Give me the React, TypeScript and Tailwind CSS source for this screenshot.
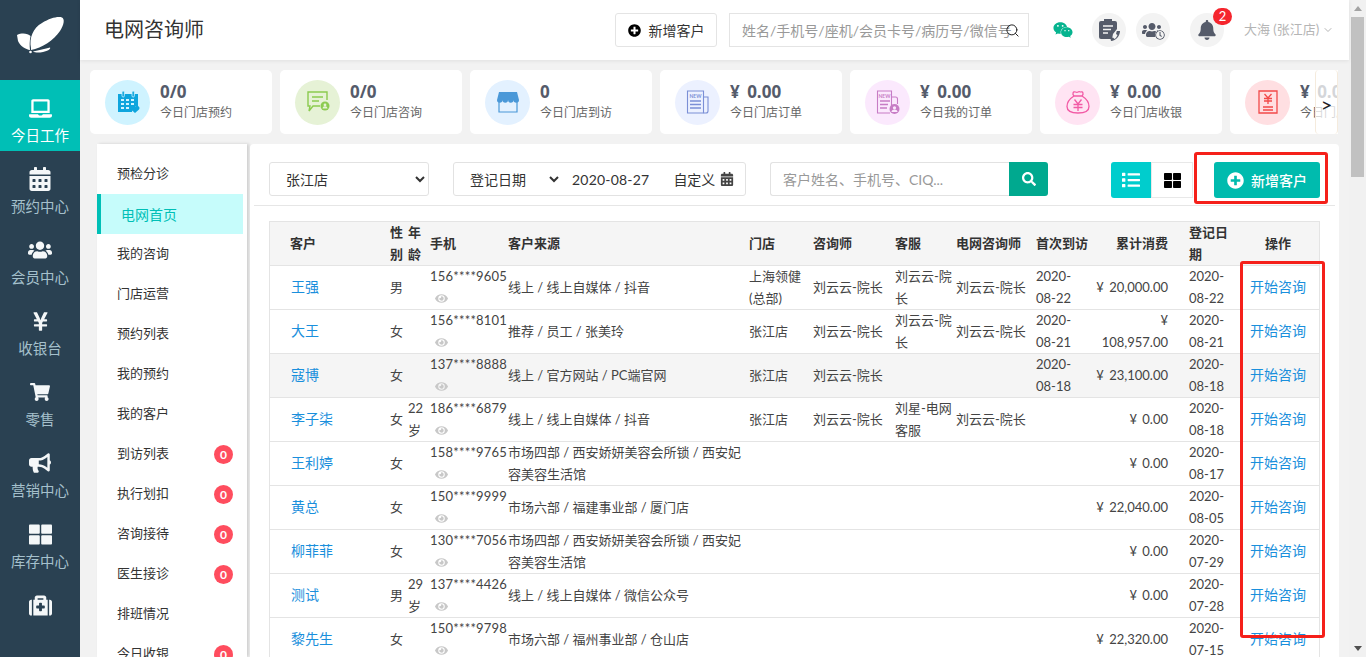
import React from "react";
import {
  FaLaptop, FaCalendarAlt, FaUsers, FaYenSign, FaShoppingCart, FaBullhorn, FaThLarge, FaMedkit,
  FaPlusCircle, FaEye, FaSearch, FaList, FaBell, FaWeixin, FaRegClock,
} from "react-icons/fa";
import { ChevronDown, Search } from "lucide-react";

const navItems = [
  { label: "今日工作", Icon: FaLaptop, active: true, size: "text-[23px]" },
  { label: "预约中心", Icon: FaCalendarAlt, size: "text-[24px]" },
  { label: "会员中心", Icon: FaUsers, size: "text-[24px]" },
  { label: "收银台", Icon: FaYenSign, size: "text-[21px]" },
  { label: "零售", Icon: FaShoppingCart, size: "text-[20px]" },
  { label: "营销中心", Icon: FaBullhorn, size: "text-[22px]" },
  { label: "库存中心", Icon: FaThLarge, size: "text-[23px]" },
  { label: "", Icon: FaMedkit, size: "text-[23px]" },
];

function CalIcon() {
  return (
    <svg viewBox="0 0 24 24" className="w-6 h-6" fill="#0ea5dd">
      <path d="M2 4h20v12a6 6 0 0 0-6 6H2z" />
      <rect x="6" y="1" width="2.4" height="6" rx="1.2" stroke="#cff3ff" strokeWidth="0.8" />
      <rect x="16" y="1" width="2.4" height="6" rx="1.2" stroke="#cff3ff" strokeWidth="0.8" />
      <path d="M5 9h3v2H5zM10 9h3v2h-3zM15 9h3v2h-3zM5 13h3v2H5zM10 13h3v2h-3zM15 13h3v2h-3zM5 17h3v2H5zM10 17h3v2h-3z" fill="#cff3ff" />
      <path d="M19 23l-4-3.6a2.3 2.3 0 0 1 3.2-3.2l.8.8.8-.8a2.3 2.3 0 0 1 3.2 3.2z" />
    </svg>
  );
}
function ChatIcon() {
  return (
    <svg viewBox="0 0 24 24" className="w-6 h-6" fill="none" stroke="#8ccb50" strokeWidth="1.4">
      <path d="M14 16H7l-4 5 1-5H2V2h19v8" />
      <path d="M6 7h11M6 11h7" />
      <circle cx="19" cy="16" r="4.5" fill="#8ccb50" stroke="none" />
      <circle cx="19" cy="15" r="1.4" fill="#e6f2d6" stroke="none" />
      <path d="M16.5 18.5a2.5 2.2 0 0 1 5 0z" fill="#e6f2d6" stroke="none" />
    </svg>
  );
}
function StoreIcon() {
  return (
    <svg viewBox="0 0 24 24" className="w-6 h-6" fill="none">
      <path d="M3 10v12h18V10" stroke="#4a98d8" strokeWidth="1.2" />
      <path d="M3 2h18l2 8a2.7 2.7 0 0 1-5.5 0 2.7 2.7 0 0 1-5.5 0 2.7 2.7 0 0 1-5.5 0 2.7 2.7 0 0 1-5.5 0z" fill="#4a98d8" />
    </svg>
  );
}
function NewsIcon() {
  return (
    <svg viewBox="0 0 24 24" className="w-6 h-6" fill="none" stroke="#7b8fd6" strokeWidth="1.1">
      <path d="M1.5 1h16v22h-16z" />
      <path d="M17.5 7h4.5v14a2 2 0 0 1-2 2h-2.5" />
      <text x="9.5" y="7.5" fontSize="5" fontWeight="700" fill="#7b8fd6" stroke="none" textAnchor="middle">NEW</text>
      <path d="M4 11h11M4 14.5h11M4 18h11" strokeWidth="1.4" />
    </svg>
  );
}
function NewsPersonIcon() {
  return (
    <svg viewBox="0 0 24 24" className="w-6 h-6" fill="none" stroke="#c77cc5" strokeWidth="1.1">
      <path d="M14 23H1.5V1h14v15" />
      <path d="M15.5 7h4a2 2 0 0 1 2 2v5" />
      <text x="8.5" y="7.5" fontSize="5" fontWeight="700" fill="#c77cc5" stroke="none" textAnchor="middle">NEW</text>
      <path d="M4 11h10M4 14.5h8M4 18h7" strokeWidth="1.4" />
      <circle cx="18.5" cy="19" r="5" fill="#c77cc5" stroke="none" />
      <circle cx="18.5" cy="17.8" r="1.6" fill="#fbe9fd" stroke="none" />
      <path d="M15.5 22a3 2.5 0 0 1 6 0z" fill="#fbe9fd" stroke="none" />
    </svg>
  );
}
function BagIcon() {
  return (
    <svg viewBox="0 0 24 24" className="w-6 h-6" fill="none" stroke="#f25aa5" strokeWidth="1.3">
      <path d="M8 6C6 4 7 1 9.5 2c1.2.5 1.7.5 2.5 0s1.3-.5 2.5 0C17 1 18 4 16 6" />
      <path d="M8 6h8c4 2.5 7 6.5 7 10.5 0 4-4 6.5-11 6.5S1 20.5 1 16.5C1 12.5 4 8.5 8 6z" />
      <path d="M8.5 9.5 12 14l3.5-4.5M7.5 14.5h9M7.5 17.5h9M12 14v7" />
    </svg>
  );
}
function ReceiptIcon() {
  return (
    <svg viewBox="0 0 24 24" className="w-6 h-6" fill="none" stroke="#f24a4a" strokeWidth="1.3">
      <path d="M3 1h18v22H3z" />
      <path d="M8.5 4 12 8l3.5-4M8 8.5h8M8 11h8M12 8v6" />
      <path d="M7 17h10M7 20h10" strokeWidth="1.5" />
    </svg>
  );
}

const stats = [
  { value: "0/0", label: "今日门店预约", bg: "bg-[#cff3ff]", icon: <CalIcon /> },
  { value: "0/0", label: "今日门店咨询", bg: "bg-[#e6f2d6]", icon: <ChatIcon /> },
  { value: "0", label: "今日门店到访", bg: "bg-[#e3f1ff]", icon: <StoreIcon /> },
  { value: "¥ 0.00", label: "今日门店订单", bg: "bg-[#ecf1ff]", icon: <NewsIcon /> },
  { value: "¥ 0.00", label: "今日我的订单", bg: "bg-[#fbe9fd]", icon: <NewsPersonIcon /> },
  { value: "¥ 0.00", label: "今日门店收银", bg: "bg-[#ffe4f3]", icon: <BagIcon /> },
  { value: "¥ 0.00", label: "今日门店退款", bg: "bg-[#ffdfe2]", icon: <ReceiptIcon /> },
];

const menu = [
  { label: "预检分诊" },
  { label: "电网首页", active: true },
  { label: "我的咨询" },
  { label: "门店运营" },
  { label: "预约列表" },
  { label: "我的预约" },
  { label: "我的客户" },
  { label: "到访列表", badge: true },
  { label: "执行划扣", badge: true },
  { label: "咨询接待", badge: true },
  { label: "医生接诊", badge: true },
  { label: "排班情况" },
  { label: "今日收银", badge: true },
];

const heads = ["客户", "性别", "年龄", "手机", "客户来源", "门店", "咨询师", "客服", "电网咨询师", "首次到访", "累计消费", "登记日期", "操作"];
const widths = ["w-[120px]", "w-[18px]", "w-[22px]", "w-[78px]", "w-[241px]", "w-[64px]", "w-[82px]", "w-[61px]", "w-[80px]", "w-[53px]", "w-[100px]", "w-[51px]", "w-[79px]"];

const D = "刘云云-院长";
const rows = [
  { n: "王强", s: "男", a: "", p: "156****9605", f: "线上 / 线上自媒体 / 抖音", st: "上海领健(总部)", c: D, k: D, w: D, v: "2020-08-22", t: "¥ 20,000.00", r: "2020-08-22" },
  { n: "大王", s: "女", a: "", p: "156****8101", f: "推荐 / 员工 / 张美玲", st: "张江店", c: D, k: D, w: D, v: "2020-08-21", t: "¥ 108,957.00", r: "2020-08-21" },
  { n: "寇博", s: "女", a: "", p: "137****8888", f: "线上 / 官方网站 / PC端官网", st: "张江店", c: D, k: "", w: "", v: "2020-08-18", t: "¥ 23,100.00", r: "2020-08-18", hl: true },
  { n: "李子柒", s: "女", a: "22岁", p: "186****6879", f: "线上 / 线上自媒体 / 抖音", st: "张江店", c: D, k: "刘星-电网客服", w: D, v: "", t: "¥ 0.00", r: "2020-08-18" },
  { n: "王利婷", s: "女", a: "", p: "158****9765", f: "市场四部 / 西安娇妍美容会所锁 / 西安妃容美容生活馆", st: "", c: "", k: "", w: "", v: "", t: "¥ 0.00", r: "2020-08-17" },
  { n: "黄总", s: "女", a: "", p: "150****9999", f: "市场六部 / 福建事业部 / 厦门店", st: "", c: "", k: "", w: "", v: "", t: "¥ 22,040.00", r: "2020-08-05" },
  { n: "柳菲菲", s: "女", a: "", p: "130****7056", f: "市场四部 / 西安娇妍美容会所锁 / 西安妃容美容生活馆", st: "", c: "", k: "", w: "", v: "", t: "¥ 0.00", r: "2020-07-29" },
  { n: "测试", s: "男", a: "29岁", p: "137****4426", f: "线上 / 线上自媒体 / 微信公众号", st: "", c: "", k: "", w: "", v: "", t: "¥ 0.00", r: "2020-07-28" },
  { n: "黎先生", s: "女", a: "", p: "150****9798", f: "市场六部 / 福州事业部 / 仓山店", st: "", c: "", k: "", w: "", v: "", t: "¥ 22,320.00", r: "2020-07-15" },
];

const td = "border-b border-[#e4e4e4] align-middle p-0";

export default function App() {
  return (
    <div className="flex h-[657px] w-[1366px] overflow-hidden bg-[#f2f2f2] text-[13px] text-[#444] font-['Lato','Noto_Sans_CJK_SC',sans-serif]">
      {/* side navigation */}
      <aside className="w-20 shrink-0 bg-[#2a4152] flex flex-col">
        <div className="h-20 shrink-0">
          <svg viewBox="0 0 80 80" className="w-20 h-20" fill="#fff">
            <path d="M31 48C29 38 33 28 42 23C50 18 58 16 62 17.5C65 19 64 25 60 31C54 40 42 48 31 50Z" />
            <path d="M17 35C22 32.5 28 33.5 30.5 36C29.5 41 29.5 46 30 50C26 49.5 20 46 18 41Z" />
            <path d="M33 51.5C39 50.5 45 48.5 50 47.5C51 49 48 51 43 52C39 52.8 35 52.8 33 51.5Z" />
            <circle cx="30.5" cy="52" r="1.3" />
          </svg>
        </div>
        {navItems.map(({ label, Icon, active, size }, i) => (
          <div key={i} className={`h-[71px] shrink-0 flex flex-col items-center pt-[15px] ${active ? "bg-[#00bfb6] text-white" : "text-[#a5c0cc]"}`}>
            <div className={`h-[26px] flex items-center justify-center ${size} ${active ? "text-white" : "text-[#f4f7f8]"}`}>
              <Icon />
            </div>
            <div className="mt-[5px] text-[14.5px] leading-5 whitespace-nowrap">{label}</div>
          </div>
        ))}
      </aside>

      {/* main column */}
      <div className="w-[1269px] shrink-0 flex flex-col">
        <header className="h-[60px] shrink-0 bg-white shadow-[0_1px_4px_rgba(0,0,0,0.08)] flex items-center pl-6 relative z-10">
          <h1 className="w-[511px] -mt-[2px] text-[20px] text-[#333] font-normal leading-none">电网咨询师</h1>
          <button className="w-[102px] h-[34px] border border-[#e4e4e4] rounded-[3px] flex items-center justify-center gap-[8px] text-[14px] text-[#333]">
            <FaPlusCircle className="text-[13px] text-black" />
            <span>新增客户</span>
          </button>
          <div className="ml-3 w-[300px] h-[34px] border border-[#e4e4e4] flex items-center pl-3 pr-2 overflow-hidden">
            <span className="flex-1 overflow-hidden whitespace-nowrap text-[#999] text-[14px]">姓名/手机号/座机/会员卡号/病历号/微信号</span>
            <Search className="w-[15px] h-[15px] text-[#222] -ml-[8px] shrink-0" strokeWidth={1.6} />
          </div>
          <FaWeixin className="ml-6 text-[20px] text-[#06b48f]" />
          <div className="ml-[19px] w-[34px] h-[34px] rounded-full bg-[#f3f3f3] flex items-center justify-center">
            <svg viewBox="0 0 24 24" className="w-6 h-6" fill="#555b6a">
              <path d="M7 1h8v2h3a2 2 0 0 1 2 2v6l-4 5-1 5H4a2 2 0 0 1-2-2V5a2 2 0 0 1 2-2h3z" />
              <path d="M6 8h10M6 11.5h8M6 15h5" stroke="#f3f3f3" strokeWidth="1.6" />
              <path d="M23 13c0 5-4 9.5-9 10l-.5-2.5 2.5-1 1.5 1.5c1.5-1 2.5-2.5 3-4l-1.5-1 .8-3z" />
            </svg>
          </div>
          <div className="ml-[10px] w-[34px] h-[34px] rounded-full bg-[#f3f3f3] flex items-center justify-center relative">
            <FaUsers className="text-[20px] text-[#555b6a] -ml-[3px]" />
            <FaRegClock className="absolute right-[5px] bottom-[7px] text-[10px] text-[#555b6a] bg-[#f3f3f3] rounded-full" />
          </div>
          <div className="ml-5 w-[34px] h-[34px] rounded-full bg-[#f3f3f3] flex items-center justify-center relative">
            <FaBell className="text-[20px] text-[#555b6a]" />
            <span className="absolute -top-[5px] left-[23px] w-[19px] h-[17px] rounded-full bg-[#f5252d] text-white text-[13px] leading-[17px] text-center">2</span>
          </div>
          <span className="ml-5 text-[13px] text-[#b5b5b5] whitespace-nowrap">大海 (张江店)</span>
          <ChevronDown className="ml-[3px] w-3 h-3 text-[#b5b5b5]" />
        </header>

        {/* stat cards */}
        <div className="relative ml-[10px] mt-[10px] w-[1248px] h-16 shrink-0 overflow-hidden">
          <div className="flex gap-2">
            {stats.map((s) => (
              <div key={s.label} className="w-[182px] h-16 shrink-0 bg-white rounded-[5px] flex items-center pl-[15px]">
                <div className={`w-[45px] h-[45px] rounded-full flex items-center justify-center ${s.bg}`}>{s.icon}</div>
                <div className="ml-[10px] -mt-[2px] whitespace-nowrap">
                  <div className="text-[17px] leading-[24px] font-bold text-[#555b6a] font-['Open_Sans','Noto_Sans_CJK_SC',sans-serif] [word-spacing:3px]">{s.value}</div>
                  <div className="text-[12px] leading-[18px] text-[#666]">{s.label}</div>
                </div>
              </div>
            ))}
          </div>
          <div className="absolute right-0 top-0 w-[23px] h-16 pt-[3px] bg-white/75 border-x border-[#f5ebdd] rounded-[4px] flex items-center justify-center text-[20px] text-[#222]">&gt;</div>
        </div>

        <div className="flex mt-[10px] ml-[17px] gap-[3px] flex-1 min-h-0">
          {/* secondary menu */}
          <nav className="w-[150px] shrink-0 bg-white shadow-[2px_0_3px_rgba(0,0,0,0.15)] pt-[10px] overflow-hidden">
            {menu.map((m) => (
              <div
                key={m.label}
                className={`h-10 shrink-0 flex items-center justify-between w-[146px] ${m.active ? "bg-[#c6fcfb] border-l-4 border-[#00bfb6] pl-5 text-[14px] text-[#00bfb6]" : "pl-5 text-[#333]"}`}
              >
                <span>{m.label}</span>
                {m.badge && (
                  <span className="w-[19px] h-[19px] mr-[10px] rounded-full bg-[#ff4d5e] text-white text-[12px] font-bold leading-[19px] text-center">0</span>
                )}
              </div>
            ))}
          </nav>

          {/* main panel */}
          <main className="relative w-[1089px] shrink-0 bg-white rounded-t-[4px] overflow-hidden">
            <div className="h-[43px] mx-1 border-b border-[#e6e6e6] flex items-start pt-[18px] px-[15px] box-content">
              <select className="w-40 h-[34px] border border-[#e2e2e2] rounded-[3px] pl-3 text-[14px] text-[#333] bg-white">
                <option>张江店</option>
              </select>
              <div className="ml-6 w-[293px] h-[34px] border border-[#e2e2e2] rounded-[3px] flex items-center text-[14px] text-[#333]">
                <select className="w-[96px] ml-3 bg-white text-[#333]">
                  <option>登记日期</option>
                </select>
                <span className="ml-[10px] tracking-[0.2px]">2020-08-27</span>
                <span className="ml-[24px]">自定义</span>
                <FaCalendarAlt className="ml-[5px] text-[14px] text-[#444]" />
              </div>
              <div className="ml-6 w-[278px] h-[34px] flex">
                <div className="flex-1 border border-[#e2e2e2] border-r-0 rounded-l-[3px] flex items-center pl-3 text-[14px] text-[#999]">客户姓名、手机号、CIQ...</div>
                <button className="w-[39px] bg-[#00a98f] rounded-r-[3px] flex items-center justify-center text-white text-[14px]"><FaSearch /></button>
              </div>
              <div className="ml-[63px] flex h-9">
                <button className="w-10 bg-[#00cdcd] rounded-l-[3px] flex items-center justify-center text-white text-[18px]"><FaList /></button>
                <button className="w-[42px] border border-[#e8e8e8] flex items-center justify-center text-black text-[17px]"><FaThLarge /></button>
              </div>
              <button className="ml-[21px] w-[106px] h-9 rounded-[3px] bg-[#00bbae] flex items-center justify-center gap-[7px] text-white text-[14px] font-medium">
                <FaPlusCircle className="text-[17px]" />
                <span>新增客户</span>
              </button>
            </div>

            <div className="mt-[15px] ml-[19px] w-[1051px]">
              <table className="table-fixed w-[1051px] border-separate border-spacing-0 border-l border-r border-t border-[#e4e4e4] leading-[21.5px]">
                <colgroup>
                  {widths.map((w, i) => <col key={i} className={w} />)}
                </colgroup>
                <thead>
                  <tr className="h-[44px] bg-[#f5f5f5] text-[#333]">
                    {heads.map((h, i) => (
                      <th
                        key={h}
                        className={`${td} font-bold ${i === 0 ? "pl-5" : ""} ${i === 10 ? "text-right pr-[21px]" : i === 12 ? "text-center pr-[3px]" : "text-left"}`}
                      >
                        {h}
                      </th>
                    ))}
                  </tr>
                </thead>
                <tbody>
                  {rows.map((r) => (
                    <tr key={r.n} className={`h-[44px] ${r.hl ? "bg-[#f5f5f5]" : ""}`}>
                      <td className={`${td} pl-[21px]`}><a className="text-[14px] text-[#1a8fdc]">{r.n}</a></td>
                      <td className={td}>{r.s}</td>
                      <td className={td}>{r.a}</td>
                      <td className={td}>
                        <div className="whitespace-nowrap tracking-[0.2px]">{r.p}</div>
                        <div className="pl-[5px] h-[21.5px] flex items-center text-[#c8c8c8] text-[13px]"><FaEye /></div>
                      </td>
                      <td className={td}>{r.f}</td>
                      <td className={td}>{r.st}</td>
                      <td className={td}>{r.c}</td>
                      <td className={td}>{r.k}</td>
                      <td className={td}>{r.w}</td>
                      <td className={td}>{r.v}</td>
                      <td className={`${td} text-right pr-[21px] [word-spacing:2px]`}>{r.t}</td>
                      <td className={td}>{r.r}</td>
                      <td className={`${td} text-center pr-[3px]`}><a className="text-[14px] text-[#1a8fdc]">开始咨询</a></td>
                    </tr>
                  ))}
                </tbody>
              </table>
            </div>

            {/* red annotation frames drawn over the screenshot */}
            <div className="absolute left-[944px] top-2 w-[134px] h-[52px] border-[3px] border-[#f5201a] rounded-[3px]" />
            <div className="absolute left-[990px] top-[117px] w-[85px] h-[377px] border-[3px] border-[#f5201a] rounded-[3px]" />
          </main>
        </div>
      </div>

      {/* page scrollbar */}
      <div className="w-[17px] shrink-0 bg-[#f1f1f1] flex flex-col items-center">
        <div className="h-[17px] shrink-0 flex items-center justify-center">
          <div className="w-0 h-0 border-x-4 border-x-transparent border-b-[5px] border-b-[#a3a3a3]" />
        </div>
        <div className="w-[13px] h-[160px] shrink-0 bg-[#c1c1c1]" />
        <div className="flex-1" />
        <div className="h-[17px] shrink-0 flex items-center justify-center">
          <div className="w-0 h-0 border-x-4 border-x-transparent border-t-[5px] border-t-[#505050]" />
        </div>
      </div>
    </div>
  );
}
